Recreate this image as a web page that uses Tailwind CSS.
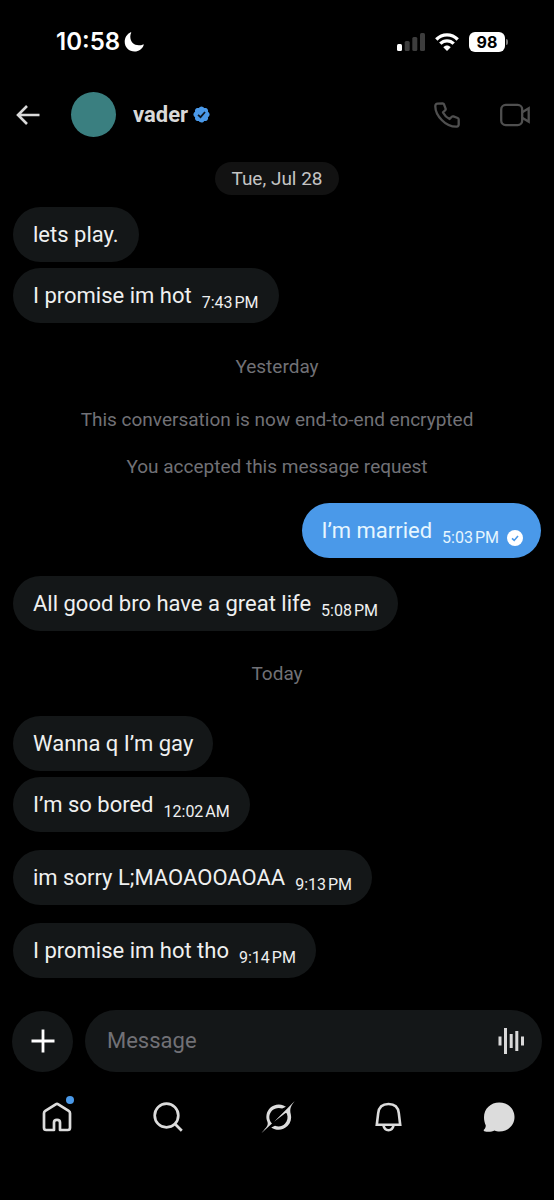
<!DOCTYPE html>
<html lang="en">
<head>
<meta charset="utf-8">
<meta name="viewport" content="width=device-width, initial-scale=1">
<title>vader</title>
<script src="https://cdn.jsdelivr.net/npm/@tailwindcss/browser@4"></script>
</head>
<body class="flex min-h-screen flex-col bg-black font-['Roboto','Noto_Sans',sans-serif] text-[#eff0f0]">

<!-- Status bar -->
<div class="flex h-[83px] items-center justify-between pl-14 pr-[46px] text-white">
  <div class="flex items-center gap-1">
    <span class="font-['Inter',sans-serif] text-2xl font-semibold">10:58</span>
    <svg class="size-5" viewBox="0 0 20 20" fill="currentColor" aria-hidden="true"><path d="M7.2.7C6.5 2 6.3 3.3 6.3 4.8c0 5 3.7 8.5 8.5 8.5 1.5 0 3-.3 4.3-.9.4-.2.7.1.6.5C18.4 16.8 14.8 19.5 10.6 19.5 5 19.5.7 15.3.7 9.7.7 5.6 3.1 2 6.7.3c.5-.2.7 0 .5.4z"/></svg>
  </div>
  <div class="flex items-center gap-2.5">
    <svg class="h-[18px] w-7" viewBox="0 0 28 18" aria-hidden="true"><rect x="0" y="11" width="5" height="7" rx="1.5" fill="#fff"/><rect x="7.7" y="8" width="5" height="10" rx="1.5" fill="#3d3d3d"/><rect x="15.3" y="4" width="5" height="14" rx="1.5" fill="#3d3d3d"/><rect x="23" y="0" width="5" height="18" rx="1.5" fill="#3d3d3d"/></svg>
    <svg class="h-[18px] w-6" viewBox="0 0 24 18" fill="none" stroke="currentColor" stroke-width="3.3" aria-hidden="true"><path d="M1.3 6.5C7.3.2 16.7.2 22.7 6.5"/><path d="M5.3 10.7c3.8-3.9 9.6-3.9 13.4 0"/><path d="M8.3 14.2c2.1-2.2 5.3-2.2 7.4 0L12 18z" fill="currentColor" stroke="none"/></svg>
    <div class="flex items-center gap-px">
      <span class="flex h-5 w-9 items-center justify-center rounded-md bg-white font-['Inter',sans-serif] text-base font-bold text-black">98</span>
      <span class="h-1.5 w-0.5 rounded-r-full bg-[#777]"></span>
    </div>
  </div>
</div>

<!-- Conversation header -->
<header class="flex h-[63px] items-center pl-4 pr-6">
  <button type="button" aria-label="Back" class="text-[#d9d9d9]">
    <svg class="h-5 w-6" viewBox="0 0 24 20" fill="none" stroke="currentColor" stroke-width="2.6" aria-hidden="true"><path d="M11 1 2 10l9 9M2 10H23.500"/></svg>
  </button>
  <span class="ml-[31px] size-[45px] rounded-full bg-[#3a7f80]"></span>
  <h1 class="ml-[17px] text-[22px] font-bold leading-7 text-[#d9d9d9]">vader</h1>
  <svg class="ml-1 size-[19px]" viewBox="0 0 22 22" role="img" aria-label="Verified"><path fill="#4a99e9" d="M20.396 11c-.018-.646-.215-1.275-.57-1.816-.354-.540-.852-.972-1.438-1.246.223-.607.270-1.264.140-1.897-.131-.634-.437-1.218-.882-1.687-.470-.445-1.053-.750-1.687-.882-.633-.130-1.290-.083-1.897.140-.273-.587-.704-1.086-1.245-1.440S11.647 1.620 11 1.604c-.646.017-1.273.213-1.813.568s-.969.854-1.240 1.440c-.608-.223-1.267-.272-1.902-.140-.635.130-1.220.436-1.690.882-.445.470-.749 1.055-.878 1.688-.130.633-.080 1.290.144 1.896-.587.274-1.087.705-1.443 1.245-.356.540-.555 1.170-.574 1.817.020.647.218 1.276.574 1.817.356.540.856.972 1.443 1.245-.224.606-.274 1.263-.144 1.896.130.634.433 1.218.877 1.688.470.443 1.054.747 1.687.878.633.132 1.290.084 1.897-.136.274.586.705 1.084 1.246 1.439.540.354 1.170.551 1.816.569.647-.016 1.276-.213 1.817-.567s.972-.854 1.245-1.440c.604.239 1.266.296 1.903.164.636-.132 1.220-.447 1.680-.907.460-.460.776-1.044.908-1.681s.075-1.299-.165-1.903c.586-.274 1.084-.705 1.439-1.246.354-.540.551-1.170.569-1.816z"/><path d="m7 11.3 2.900 2.800 5.200-6" fill="none" stroke="#0b1520" stroke-width="2"/></svg>
  <button type="button" aria-label="Call" class="ml-auto text-[#4f4f4f]">
    <svg class="size-[26px]" viewBox="0 0 26 26" fill="none" stroke="currentColor" stroke-width="2.3" stroke-linejoin="round" aria-hidden="true"><path d="M3.500 1.700 8.600 1.300Q9.600 1.300 10 2.300L11.600 6.600Q11.900 7.500 11.200 8.200L9 10.400Q11.200 14.700 15.600 17L17.800 14.800Q18.500 14.100 19.400 14.400L23.700 16Q24.700 16.400 24.700 17.400V22.500Q24.600 24.400 22.700 24.700 14.500 24.900 8 18.200 1.200 11.500 1.300 4 1.500 1.900 3.500 1.700Z"/></svg>
  </button>
  <button type="button" aria-label="Video call" class="ml-10 text-[#4f4f4f]">
    <svg class="h-6 w-[30px]" viewBox="0 0 30 24" fill="none" stroke="currentColor" stroke-width="2.3" aria-hidden="true"><rect x="1.200" y="1.900" width="21" height="20.200" rx="4.500"/><path d="m22.200 9.300 6.500-4v13.400l-6.500-4"/></svg>
  </button>
</header>

<!-- Messages -->
<main class="flex flex-1 flex-col px-[13px] text-[22px] leading-7">
  <div class="mt-4 flex h-[33px] items-center self-center rounded-full bg-[#121212] px-4 text-[19px] text-[#c4c4c4]">Tue, Jul 28</div>
  <div class="mt-3 flex h-[55px] items-center self-start rounded-full bg-[#141718] px-5">lets play.</div>
  <div class="mt-1.5 flex h-[55px] items-center gap-2.5 self-start rounded-full bg-[#141718] px-5"><p>I promise im hot</p><time class="pt-3.5 text-base leading-6">7:43&#8239;PM</time></div>

  <p class="mt-8 text-center text-[19px] leading-6 text-[#717176]">Yesterday</p>
  <p class="mt-[29px] text-center text-[19px] leading-6 text-[#717176]">This conversation is now end-to-end encrypted</p>
  <p class="mt-[23px] text-center text-[19px] leading-6 text-[#717176]">You accepted this message request</p>

  <div class="mt-6 flex h-[55px] items-center gap-2.5 self-end rounded-full bg-[#4a99e9] pl-5 pr-[18px] text-[#e6f6ff]"><p>I’m married</p><time class="pt-3.5 text-base leading-6">5:03&#8239;PM</time>
    <svg class="-ml-0.5 mt-3.5 size-4" viewBox="0 0 16 16" role="img" aria-label="Sent"><circle cx="8" cy="8" r="8" fill="#fff"/><path d="m5 8.300 2.200 2.100 3.800-4.500" fill="none" stroke="#4a99e9" stroke-width="1.600"/></svg>
  </div>
  <div class="mt-[18px] flex h-[55px] items-center gap-2.5 self-start rounded-full bg-[#141718] px-5"><p>All good bro have a great life</p><time class="pt-3.5 text-base leading-6">5:08&#8239;PM</time></div>

  <p class="mt-[31px] text-center text-[19px] leading-6 text-[#717176]">Today</p>

  <div class="mt-[30px] flex h-[55px] items-center self-start rounded-full bg-[#141718] px-5">Wanna q I’m gay</div>
  <div class="mt-1.5 flex h-[55px] items-center gap-2.5 self-start rounded-full bg-[#141718] px-5"><p>I’m so bored</p><time class="pt-3.5 text-base leading-6">12:02&#8239;AM</time></div>
  <div class="mt-[18px] flex h-[55px] items-center gap-2.5 self-start rounded-full bg-[#141718] px-5"><p>im sorry L;MAOAOOAOAA</p><time class="pt-3.5 text-base leading-6">9:13&#8239;PM</time></div>
  <div class="mt-[18px] flex h-[55px] items-center gap-2.5 self-start rounded-full bg-[#141718] px-5"><p>I promise im hot tho</p><time class="pt-3.5 text-base leading-6">9:14&#8239;PM</time></div>
</main>

<!-- Composer -->
<form class="flex items-center gap-3 px-3 pt-8">
  <button type="button" aria-label="Add attachment" class="flex size-[61px] shrink-0 items-center justify-center rounded-full bg-[#141718] text-white">
    <svg class="size-6" viewBox="0 0 24 24" stroke="currentColor" stroke-width="2.8" aria-hidden="true"><path d="M12 .5v23M.5 12h23"/></svg>
  </button>
  <div class="flex h-[62px] min-w-0 flex-1 items-center rounded-full bg-[#141718] pl-[22px] pr-[17px]">
    <input type="text" aria-label="Message" placeholder="Message" class="min-w-0 flex-1 bg-transparent text-[22px] leading-7 outline-none placeholder:text-[#717176]">
    <button type="button" aria-label="Record voice message" class="text-[#d9d9d9]">
      <svg class="h-[26px] w-[27px]" viewBox="0 0 27 26" fill="currentColor" aria-hidden="true"><path d="M.5 8.500h3v9h-3zM6 0h3v26H6zM11.700 6h3v14h-3zM17.300 3h3v20h-3zM23 8.500h3v9h-3z"/></svg>
    </button>
  </div>
</form>

<!-- Tab bar -->
<nav class="grid h-[90px] grid-cols-5 place-items-center pl-0.5 text-[#dcdcdc]">
  <a href="#home" aria-label="Home, new posts" class="relative">
    <svg class="size-[30px]" viewBox="0 0 30 30" fill="none" stroke="currentColor" stroke-width="2.7" stroke-linejoin="round" aria-hidden="true"><path d="M12 28H4.200Q2 28 2 25.800V11.200Q2 9.700 3.300 8.900L13.700 2.300Q15 1.500 16.300 2.300L26.700 8.900Q28 9.700 28 11.200V25.800Q28 28 25.800 28H18V20.500Q18 17.800 15 17.800T12 20.500Z"/></svg>
    <span class="absolute -right-0.5 -top-1.5 size-2 rounded-full bg-[#4a99e9]"></span>
  </a>
  <a href="#search" aria-label="Search">
    <svg class="size-[30px]" viewBox="0 0 30 30" fill="none" stroke="currentColor" stroke-width="2.7" aria-hidden="true"><circle cx="13.500" cy="13.500" r="11.800"/><path d="m21.800 21.800 7 7"/></svg>
  </a>
  <a href="#grok" aria-label="Grok">
    <svg class="size-[34px]" viewBox="0 0 34 34" fill="currentColor" aria-hidden="true"><path d="M13 21.700 24.300 13.300C24.900 12.900 25.600 13.100 25.900 13.700 27.200 17.100 26.600 21.100 23.900 23.800 21.200 26.500 17.400 27.100 14 25.700L10.200 27.500C15.700 31.200 22.300 30.300 26.500 26.100 29.800 22.800 30.800 18.300 29.800 14.200 28.400 8.300 30.100 5.900 33.700 1L26.500 8.200ZM11 23.600C7.100 19.800 7.800 14 11.100 10.600 13.600 8.100 17.700 7.100 21.200 8.600L25 6.800C24.300 6.300 23.400 5.800 22.500 5.400 17.900 3.600 12.600 4.500 9 8.100 5.500 11.600 4.400 17 6.300 21.600 7.700 25 5.400 27.400 3.100 29.900 2.200 30.900 1.300 31.800.6 32.900Z"/></svg>
  </a>
  <a href="#notifications" aria-label="Notifications">
    <svg class="h-[30px] w-[27px]" viewBox="0 0 27 30" fill="none" stroke="currentColor" stroke-width="2.6" aria-hidden="true"><path d="M3.200 11.200Q4.200 2 13.500 2T23.800 11.200L25.200 22.800H1.800Z"/><path d="M8.300 23Q9.500 28.200 13.500 28.200T18.700 23"/></svg>
  </a>
  <a href="#messages" aria-label="Messages">
    <svg class="h-[30px] w-8" viewBox="0 0 32 30" fill="currentColor" aria-hidden="true"><path d="M16.200.5C24.900.5 31.500 6.800 31.500 15S25 29.500 16.500 29.500c-2 0-3.400-.4-4.900-1-2.500 1.200-6.900 1.700-10.200.7-.8-.2-.9-1.100-.3-1.600 1.200-1.100 1.800-2.800 1.600-4.400C1.700 20.800 1 18.200 1 15.200 1 6.800 7.700.5 16.200.5z"/></svg>
  </a>
</nav>
<div class="h-[38px]"></div>
</body>
</html>
